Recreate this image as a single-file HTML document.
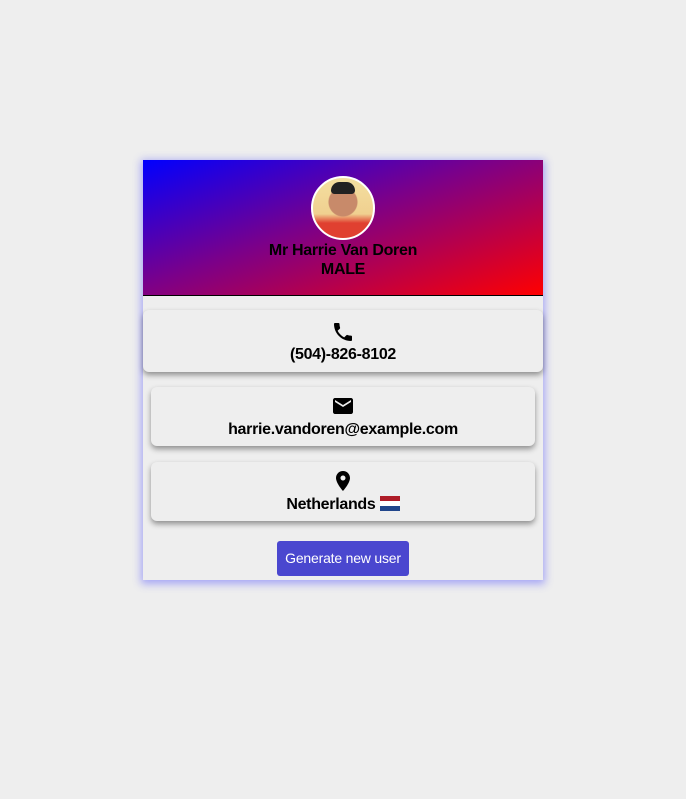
<!DOCTYPE html>
<html><head><style>
body{margin:0;background:#eeeeee;width:686px;height:799px;font-family:"Liberation Sans",Arial,sans-serif;}
.card{position:absolute;left:143px;top:160px;width:400px;height:420px;background:#eeeeee;box-shadow:0 2px 8px 2px rgba(80,80,255,.45);}
.hdr{position:absolute;left:0;top:0;width:400px;height:135px;background:linear-gradient(160deg,#0000ff 0%,#7a008a 45%,#ff0000 100%);border-bottom:1px solid #000;}
.av{position:absolute;left:168px;top:16px;width:60px;height:60px;border-radius:50%;border:2px solid #fff;overflow:hidden;background:radial-gradient(circle at 50% 40%,#c88a6a 0 14px,transparent 15px),linear-gradient(#f3dfa0,#f0d090 60%,#e04030 75%,#e04030);}
.t{position:absolute;left:0;width:400px;text-align:center;font-weight:bold;font-size:16px;color:#000;letter-spacing:-0.3px;}
.box{position:absolute;background:#eeeeee;border-radius:6px;box-shadow:0 3px 6px rgba(0,0,0,.4);}
.ic{position:absolute;left:50%;transform:translateX(-50%);}
.btn{position:absolute;left:134px;top:381px;width:132px;height:35px;background:#4a47cf;border-radius:3px;color:#fff;font-size:14px;text-align:center;line-height:35px;letter-spacing:-0.2px;}
</style></head><body>
<div class="card">
 <div class="hdr">
  <div class="av"><div style="position:absolute;left:18px;top:4px;width:24px;height:12px;background:#222;border-radius:10px 10px 4px 4px"></div></div>
  <div class="t" style="top:82px">Mr Harrie Van Doren</div>
  <div class="t" style="top:101px">MALE</div>
 </div>
 <div class="box" style="left:0;top:150px;width:400px;height:62px">
  <svg class="ic" style="top:10px" width="24" height="24" viewBox="0 0 24 24"><path d="M6.6 10.8c1.4 2.8 3.8 5.1 6.6 6.6l2.2-2.2c.3-.3.7-.4 1-.2 1.1.4 2.3.6 3.6.6.6 0 1 .4 1 1V20c0 .6-.4 1-1 1C10.6 21 3 13.4 3 4c0-.6.4-1 1-1h3.5c.6 0 1 .4 1 1 0 1.3.2 2.5.6 3.6.1.3 0 .7-.2 1L6.6 10.8z"/></svg>
  <div class="t" style="top:36px">(504)-826-8102</div>
 </div>
 <div class="box" style="left:8px;top:227px;width:384px;height:59px">
  <svg class="ic" style="top:7px" width="26" height="24" viewBox="0 0 24 24"><path d="M20 4H4c-1.1 0-2 .9-2 2v12c0 1.1.9 2 2 2h16c1.1 0 2-.9 2-2V6c0-1.1-.9-2-2-2zm0 4l-8 5-8-5V6l8 5 8-5v2z"/></svg>
  <div class="t" style="left:0;width:384px;top:34px">harrie.vandoren@example.com</div>
 </div>
 <div class="box" style="left:8px;top:302px;width:384px;height:59px">
  <svg class="ic" style="top:7px" width="24" height="24" viewBox="0 0 24 24"><path d="M12 2C8.1 2 5 5.1 5 9c0 5.2 7 13 7 13s7-7.8 7-13c0-3.9-3.1-7-7-7zm0 9.5c-1.4 0-2.5-1.1-2.5-2.5s1.1-2.5 2.5-2.5 2.5 1.1 2.5 2.5-1.1 2.5-2.5 2.5z"/></svg>
  <div class="t" style="left:0;width:384px;top:34px">Netherlands <span style="display:inline-block;width:20px;height:15px;vertical-align:-2px;background:linear-gradient(#ae1c28 0 33%,#fff 33% 66%,#21468b 66%)"></span></div>
 </div>
 <div class="btn">Generate new user</div>
</div>
</body></html>
